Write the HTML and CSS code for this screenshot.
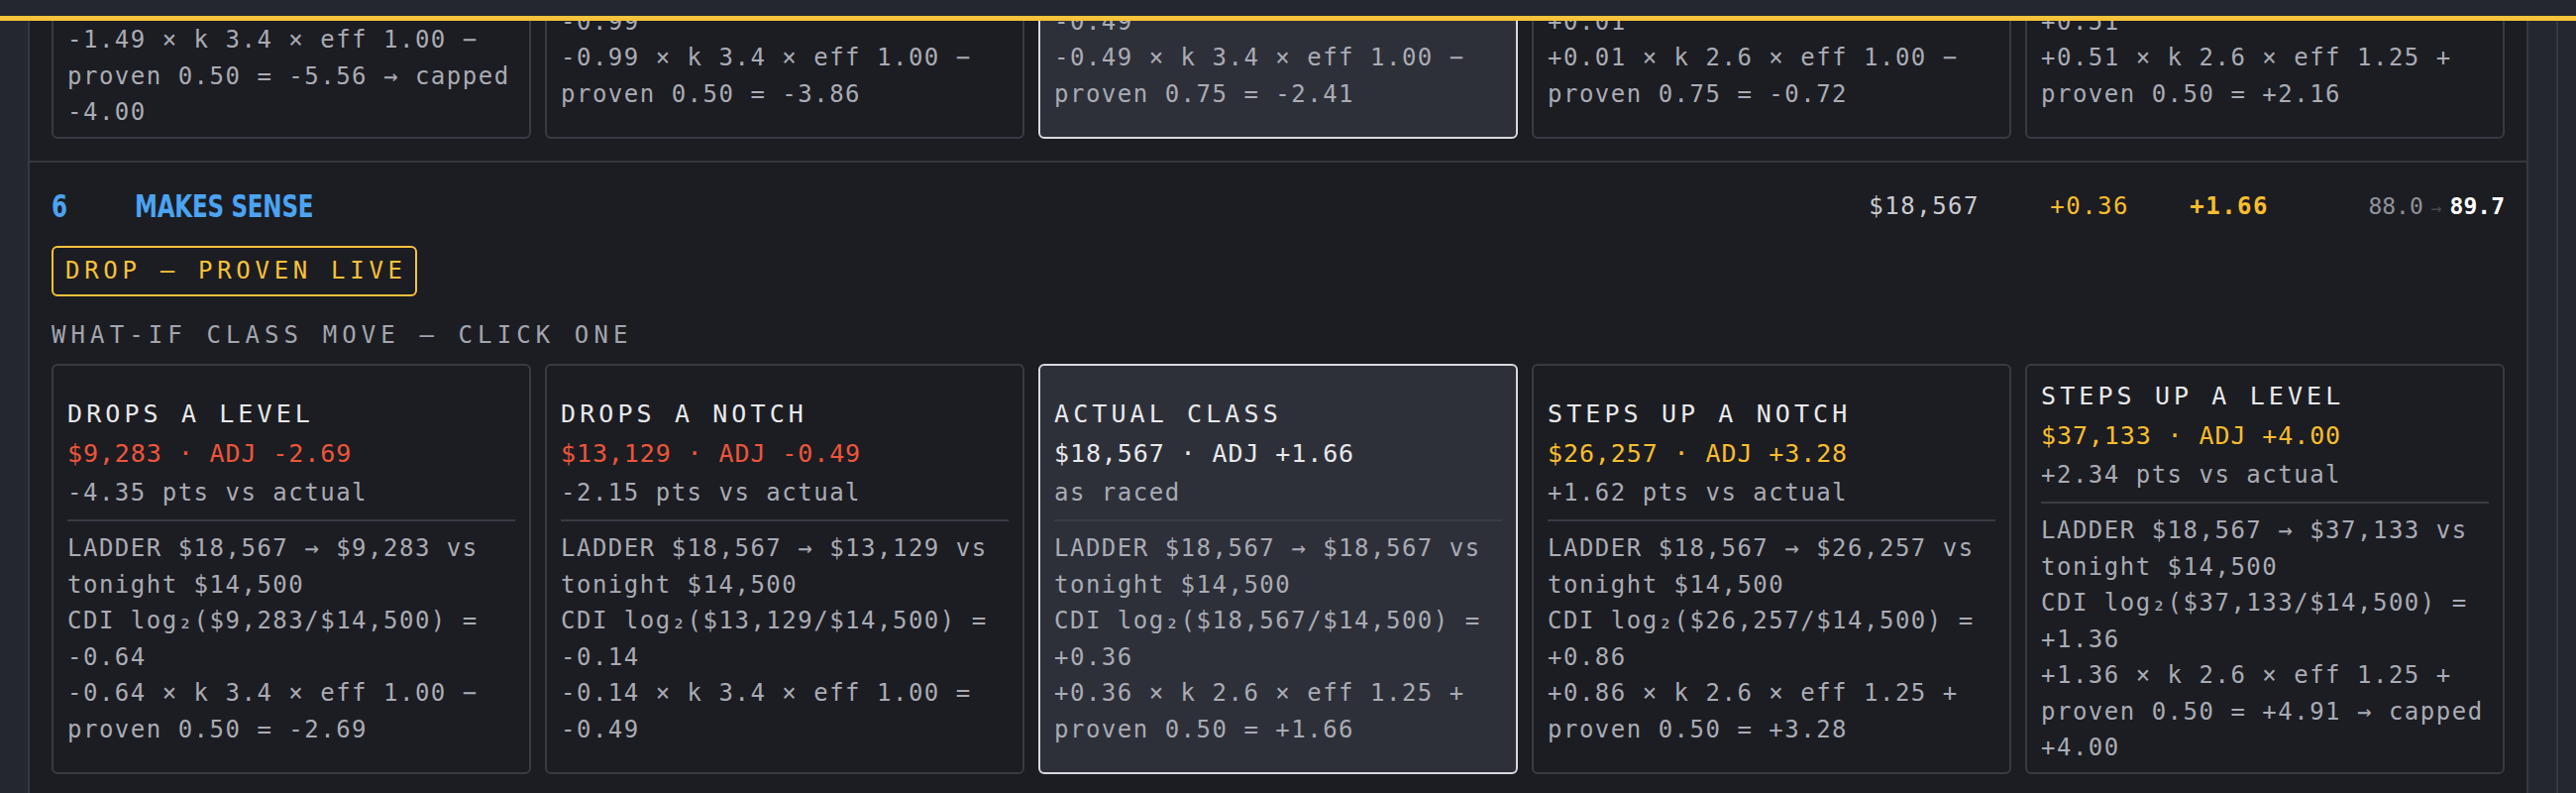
FILE: index.html
```html
<!DOCTYPE html>
<html lang="en">
<head>
    <meta charset="UTF-8">
    <meta name="viewport" content="width=device-width, initial-scale=1.0">
    <title>Class Ladder — What-If</title>
    <link rel="stylesheet" href="styles.css">
</head>
<body>

    <header class="topbar"></header>

    <div class="frame">
        <aside class="gutter"></aside>

        <main class="board">
            <!-- list is scrolled: runner 5 sits mostly above the fold -->
            <div class="runs">

                <section class="run">
                    <div class="run-head">
                        <span class="run-no"><span class="squeeze">5</span></span>
                        <span class="run-name"><span class="squeeze">Night Owl</span></span>
                        <span class="cell price">$10,318</span>
                        <span class="cell cdi down">-0.49</span>
                        <span class="cell adj down">-2.41</span>
                        <span class="cell rating">84.2<i>→</i><b>81.8</b></span>
                    </div>
                    <div class="badge">Rise — lightly proven</div>
                    <div class="label">What-if class move — click one</div>
                    <div class="moves">
                        <div class="move">
                            <div class="move-title">Drops a level</div>
                            <div class="move-value down">$5,159 · ADJ -4.00</div>
                            <div class="move-delta">-1.59 pts vs actual</div>
                            <div class="move-rule"></div>
                            <div class="move-calc">LADDER $10,318 → $5,159 vs tonight $14,500</div>
                            <div class="move-calc">CDI log₂($5,159/$14,500) = -1.49</div>
                            <div class="move-calc">-1.49 × k 3.4 × eff 1.00 − proven 0.50 = -5.56 → capped -4.00</div>
                        </div>
                        <div class="move">
                            <div class="move-title">Drops a notch</div>
                            <div class="move-value down">$7,296 · ADJ -3.86</div>
                            <div class="move-delta">-1.45 pts vs actual</div>
                            <div class="move-rule"></div>
                            <div class="move-calc">LADDER $10,318 → $7,296 vs tonight $14,500</div>
                            <div class="move-calc">CDI log₂($7,296/$14,500) = -0.99</div>
                            <div class="move-calc">-0.99 × k 3.4 × eff 1.00 − proven 0.50 = -3.86</div>
                        </div>
                        <div class="move is-actual">
                            <div class="move-title">Actual class</div>
                            <div class="move-value">$10,318 · ADJ -2.41</div>
                            <div class="move-delta">as raced</div>
                            <div class="move-rule"></div>
                            <div class="move-calc">LADDER $10,318 → $10,318 vs tonight $14,500</div>
                            <div class="move-calc">CDI log₂($10,318/$14,500) = -0.49</div>
                            <div class="move-calc">-0.49 × k 3.4 × eff 1.00 − proven 0.75 = -2.41</div>
                        </div>
                        <div class="move">
                            <div class="move-title">Steps up a notch</div>
                            <div class="move-value down">$14,592 · ADJ -0.72</div>
                            <div class="move-delta">+1.69 pts vs actual</div>
                            <div class="move-rule"></div>
                            <div class="move-calc">LADDER $10,318 → $14,592 vs tonight $14,500</div>
                            <div class="move-calc">CDI log₂($14,592/$14,500) = +0.01</div>
                            <div class="move-calc">+0.01 × k 2.6 × eff 1.00 − proven 0.75 = -0.72</div>
                        </div>
                        <div class="move">
                            <div class="move-title">Steps up a level</div>
                            <div class="move-value up">$20,636 · ADJ +2.16</div>
                            <div class="move-delta">+4.57 pts vs actual</div>
                            <div class="move-rule"></div>
                            <div class="move-calc">LADDER $10,318 → $20,636 vs tonight $14,500</div>
                            <div class="move-calc">CDI log₂($20,636/$14,500) = +0.51</div>
                            <div class="move-calc">+0.51 × k 2.6 × eff 1.25 + proven 0.50 = +2.16</div>
                        </div>
                    </div>
                </section>

                <section class="run">
                    <div class="run-head">
                        <span class="run-no"><span class="squeeze">6</span></span>
                        <span class="run-name"><span class="squeeze">Makes Sense</span></span>
                        <span class="cell price">$18,567</span>
                        <span class="cell cdi up">+0.36</span>
                        <span class="cell adj up">+1.66</span>
                        <span class="cell rating">88.0<i>→</i><b>89.7</b></span>
                    </div>
                    <div class="badge">Drop — proven live</div>
                    <div class="label">What-if class move — click one</div>
                    <div class="moves">
                        <div class="move">
                            <div class="move-title">Drops a level</div>
                            <div class="move-value down">$9,283 · ADJ -2.69</div>
                            <div class="move-delta">-4.35 pts vs actual</div>
                            <div class="move-rule"></div>
                            <div class="move-calc">LADDER $18,567 → $9,283 vs tonight $14,500</div>
                            <div class="move-calc">CDI log₂($9,283/$14,500) = -0.64</div>
                            <div class="move-calc">-0.64 × k 3.4 × eff 1.00 − proven 0.50 = -2.69</div>
                        </div>
                        <div class="move">
                            <div class="move-title">Drops a notch</div>
                            <div class="move-value down">$13,129 · ADJ -0.49</div>
                            <div class="move-delta">-2.15 pts vs actual</div>
                            <div class="move-rule"></div>
                            <div class="move-calc">LADDER $18,567 → $13,129 vs tonight $14,500</div>
                            <div class="move-calc">CDI log₂($13,129/$14,500) = -0.14</div>
                            <div class="move-calc">-0.14 × k 3.4 × eff 1.00 = -0.49</div>
                        </div>
                        <div class="move is-actual">
                            <div class="move-title">Actual class</div>
                            <div class="move-value">$18,567 · ADJ +1.66</div>
                            <div class="move-delta">as raced</div>
                            <div class="move-rule"></div>
                            <div class="move-calc">LADDER $18,567 → $18,567 vs tonight $14,500</div>
                            <div class="move-calc">CDI log₂($18,567/$14,500) = +0.36</div>
                            <div class="move-calc">+0.36 × k 2.6 × eff 1.25 + proven 0.50 = +1.66</div>
                        </div>
                        <div class="move">
                            <div class="move-title">Steps up a notch</div>
                            <div class="move-value up">$26,257 · ADJ +3.28</div>
                            <div class="move-delta">+1.62 pts vs actual</div>
                            <div class="move-rule"></div>
                            <div class="move-calc">LADDER $18,567 → $26,257 vs tonight $14,500</div>
                            <div class="move-calc">CDI log₂($26,257/$14,500) = +0.86</div>
                            <div class="move-calc">+0.86 × k 2.6 × eff 1.25 + proven 0.50 = +3.28</div>
                        </div>
                        <div class="move">
                            <div class="move-title">Steps up a level</div>
                            <div class="move-value up">$37,133 · ADJ +4.00</div>
                            <div class="move-delta">+2.34 pts vs actual</div>
                            <div class="move-rule"></div>
                            <div class="move-calc">LADDER $18,567 → $37,133 vs tonight $14,500</div>
                            <div class="move-calc">CDI log₂($37,133/$14,500) = +1.36</div>
                            <div class="move-calc">+1.36 × k 2.6 × eff 1.25 + proven 0.50 = +4.91 → capped +4.00</div>
                        </div>
                    </div>
                </section>

            </div>
        </main>

        <aside class="rail"></aside>
    </div>

</body>
</html>
```

FILE: styles.css
```css
body {
    margin: 0;
    height: 800px;
    display: flex;
    flex-direction: column;
    overflow: hidden;
    background: #252730;
    color: #a9abb5;
    font-family: "DejaVu Sans Mono", "Liberation Mono", monospace;
    font-size: 24px;
}

/* barra fija de arriba con la raya amarilla */
.topbar {
    height: 16px;
    flex-shrink: 0;
    background: #252730;
    border-bottom: 5px solid #f8c23a;
    position: relative;
    z-index: 2;
}

.frame {
    flex: 1;
    display: flex;
    min-height: 0;
}
.gutter { width: 28px; flex-shrink: 0; }
.rail {
    width: 28px;
    flex-shrink: 0;
    margin-right: 18px;
    border-right: 2px solid #363843;
}

.board {
    flex: 1;
    min-width: 0;
    background: #1c1d22;
    border-left: 2px solid #363843;
    border-right: 2px solid #363843;
    overflow: hidden;
}
.runs { margin-top: -500px; }

/* una fila por corredor */
.run {
    border-top: 2px solid #34363f;
    padding: 24px 22px 22px;
}
.run-head {
    display: flex;
    align-items: center;
    height: 40px;
}
.run-no,
.run-name {
    font-family: "DejaVu Sans", sans-serif;
    font-stretch: condensed;
    font-weight: 700;
    font-size: 32px;
    color: #4ba3f2;
    text-transform: uppercase;
}
/* letra de cartel: más alta que ancha */
.squeeze {
    display: inline-block;
    transform: scaleX(0.8);
    transform-origin: left center;
    letter-spacing: -0.3px;
}
.run-no { width: 84px; }
.run-name { flex: 1; }
.cell {
    text-align: right;
    letter-spacing: 1.5px;
}
.price { width: 140px; color: #c9cad1; }
.cdi { width: 151px; }
.adj { width: 141px; font-weight: 700; }
.rating {
    width: 238px;
    color: #8f929c;
    font-size: 23px;
    letter-spacing: 0;
}
.rating i {
    font-style: normal;
    font-size: 18px;
    margin: 0 8px;
    color: #454852;
}
.rating b { color: #ffffff; }
.cell.up { color: #f7bd2e; }
.cell.down { color: #ee553b; }

.badge {
    display: inline-block;
    margin-top: 20px;
    padding: 6px 8px 6px 12px;
    line-height: 35px;
    border: 2px solid #f8c23a;
    border-radius: 6px;
    color: #f8c23a;
    text-transform: uppercase;
    letter-spacing: 4.7px;
}
.label {
    margin-top: 21px;
    line-height: 36px;
    text-transform: uppercase;
    letter-spacing: 5.1px;
    color: #a3a5ae;
}

/* tarjetas del "what-if" */
.moves {
    display: grid;
    grid-template-columns: repeat(5, 1fr);
    gap: 14px;
    margin-top: 11px;
}
.move {
    display: flex;
    flex-direction: column;
    justify-content: center;
    padding: 10.5px 14px 6.5px;
    border: 2px solid #383a44;
    border-radius: 6px;
    letter-spacing: 1.5px;
    line-height: 36.5px;
}
.move.is-actual {
    background: #2e3039;
    border-color: #d8d9de;
}
.move-title {
    font-size: 25px;
    line-height: 40px;
    letter-spacing: 4.1px;
    text-transform: uppercase;
    color: #e8e9ed;
}
.move-value {
    font-size: 25px;
    line-height: 39.5px;
    letter-spacing: 0.9px;
    color: #e8e9ed;
}
.move-value.down { color: #ee553b; }
.move-value.up { color: #f7bd2e; }
.move-delta { line-height: 40px; }
.move-rule {
    height: 2px;
    margin: 7px 0 9px;
    background: #393b45;
}
.move-calc { color: #a9abb5; }
```
